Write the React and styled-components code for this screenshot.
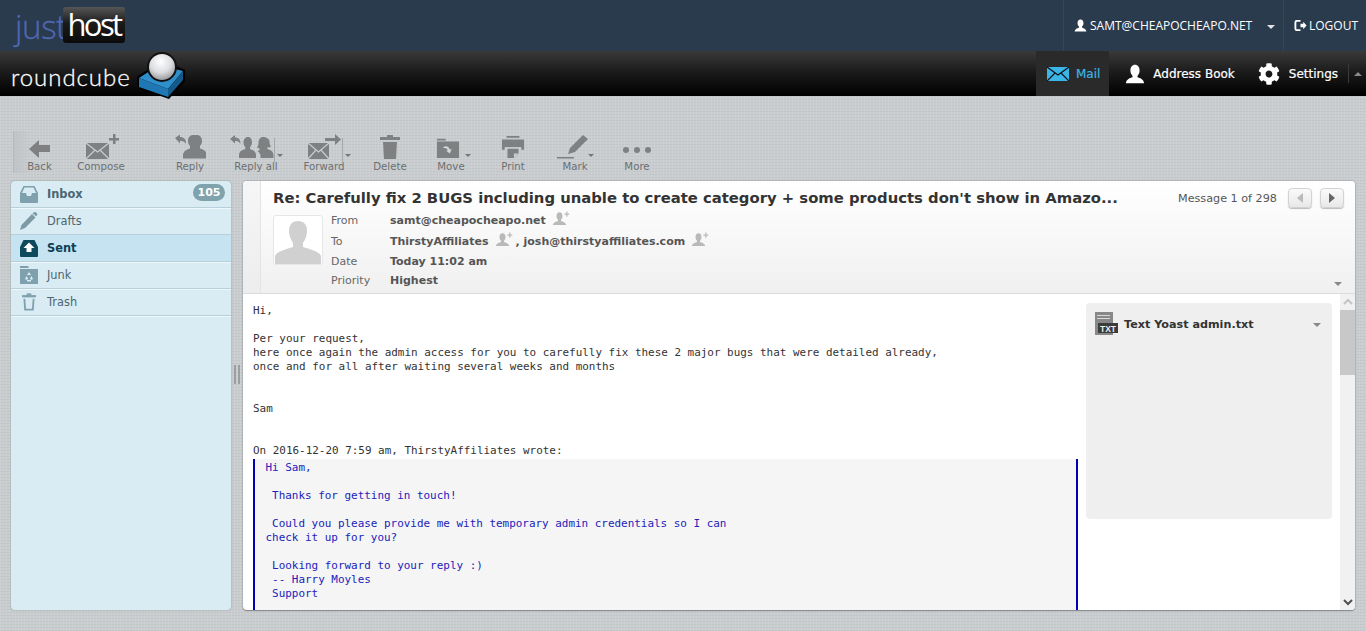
import React from "react";
import styled, { createGlobalStyle } from "styled-components";
import { FaCog } from "react-icons/fa";

const Global = createGlobalStyle`
  html, body { margin: 0; padding: 0; height: 100%; overflow: hidden; }
  body { font-family: "DejaVu Sans", Verdana, sans-serif; }
  *, *::before, *::after { box-sizing: border-box; }
`;

const Page = styled.div`
  width: 1366px; height: 631px; display: flex; flex-direction: column; overflow: hidden;
  background-color: #c9cdcf;
  background-image:
    repeating-linear-gradient(90deg, rgba(255,255,255,.09) 0 1px, transparent 1px 3px),
    repeating-linear-gradient(0deg, rgba(0,0,0,.035) 0 1px, transparent 1px 3px);
`;
const TopBar = styled.header`
  height: 51px; flex: none; background: #2a3b4e; display: flex; justify-content: space-between; align-items: stretch;
`;
const HostLogo = styled.div`
  display: flex; margin: 7px 0 0 15px; height: 36px; align-items: center; font-family: "Open Sans", sans-serif;
`;
const Just = styled.span`
  color: #4f68b4; font-weight: 300; font-size: 33px; letter-spacing: -.4px; width: 48px; margin-top: 3px; -webkit-text-stroke: .3px #4f68b4;
`;
const Host = styled.span`
  width: 62px; height: 36px; line-height: 34px; text-align: center; color: #fff; border-radius: 3px; font-size: 31px; letter-spacing: -2.6px;
  background: linear-gradient(#565656, #1b1b1b 45%, #0b0b0b);
`;
const TopRight = styled.div`display: flex;`;
const TopItem = styled.div`
  display: flex; align-items: center; width: ${p => p.$w}px; padding-left: ${p => p.$pl}px;
  border-left: 1px solid #34465a; color: #fff; font: 12px "Open Sans", sans-serif; gap: ${p => p.$gap || 3}px;
`;
const TopCaret = styled.i`
  width: 0; height: 0; margin-left: 12px; margin-top: 2px; border: 4px solid transparent; border-top-color: #dfe3e7; border-bottom: 0;
`;
const TaskBar = styled.div`
  height: 45px; flex: none; display: flex; justify-content: space-between;
  background: linear-gradient(#3a3a3a, #1c1c1c 45%, #000);
`;
const CubeLogo = styled.div`
  display: flex; margin-left: 11px; position: relative;
`;
const CubeText = styled.span`
  font: 300 24px Lato, sans-serif; letter-spacing: .95px; color: #fff; margin-top: 10px; line-height: 32px; width: 126px; -webkit-text-stroke: .3px #fff;
`;
const Cube = styled.svg`
  width: 48px; height: 46px; margin-top: 2px; overflow: visible; flex: none;
`;
const TaskNav = styled.nav`display: flex; align-items: stretch;`;
const TaskItem = styled.a`
  display: flex; align-items: center; padding: 0 ${p => p.$pr}px 0 ${p => p.$pl}px; gap: ${p => p.$gap}px;
  font-size: 12px; -webkit-text-stroke: .2px currentColor; color: ${p => (p.$active ? "#3bb5e8" : "#fff")};
  background: ${p => (p.$active ? "#2a2a2a" : "transparent")};
`;
const TaskEnd = styled.div`
  width: 18px; margin: 13px 0; border-left: 1px solid #3a3a3a; display: flex; align-items: center; justify-content: center;
  &::after { content: ""; border: 4px solid transparent; border-bottom-color: #888; border-top: 0; }
`;
const Toolbar = styled.div`
  height: 85px; flex: none; display: flex; align-items: flex-end; padding: 0 0 8px 13px;
`;
const ToolBtn = styled.div`
  width: ${p => p.$w}px; margin-left: ${p => p.$ml || 0}px; height: 42px; display: flex; flex-direction: column; align-items: center; justify-content: flex-end;
  color: #6c6f71; font-size: 10.2px; line-height: 12px; position: relative;
  ${p => p.$first && "border-left: 1px solid #b4b8ba; background: linear-gradient(90deg, #c0c4c6, transparent 35%);"}
  svg { display: block; margin-bottom: 1px; }
`;
const Drop = styled.i`
  position: absolute; right: ${p => p.$r}px; top: 23px; width: 0; height: 0; border: 3.5px solid transparent; border-top-color: #777; border-bottom: 0;
  ${p => p.$sep && `&::before { content: ""; position: absolute; left: -6px; top: -19px; height: 24px; width: 1px; background: #a4a8aa; }`}
`;
const Main = styled.div`
  flex: 1; display: flex; padding: 0 11px 21px 11px; min-height: 0;
`;
const Sidebar = styled.aside`
  width: 220px; background: #d9ecf4; border-radius: 4px; overflow: hidden; box-shadow: 0 0 2px #8f9496;
`;
const Folder = styled.div`
  height: 27px; display: flex; align-items: center; padding-left: 8px; gap: 8px; font-size: 11.4px; position: relative;
  color: ${p => (p.$sel ? "#0e3f52" : "#4d6670")}; font-weight: ${p => (p.$bold ? 700 : 400)};
  background: ${p => (p.$sel ? "#c5e3f0" : "transparent")};
  border-bottom: 1px solid #b9d0d8; box-shadow: 0 1px 0 #eef7fb;
  svg { width: 20px; height: 20px; flex: none; }
`;
const Badge = styled.span`
  position: absolute; right: 6px; top: 3px; height: 17px; width: 32px; border-radius: 9px; background: #7fa2ad; color: #fff; font-weight: 700; text-align: center; line-height: 17px; font-size: 11px;
`;
const Split = styled.div`
  width: 12px; display: flex; align-items: center; justify-content: center; padding-bottom: 42px;
  &::after { content: ""; width: 6px; height: 19px; border-left: 2px solid #9a9fa2; border-right: 2px solid #9a9fa2; }
`;
const Panel = styled.section`
  flex: 1; min-width: 0; background: #fff; border-radius: 4px; overflow: hidden; display: flex; flex-direction: column; box-shadow: 0 0 2px #85898b, 0 1px 1px #85898b;
`;
const MsgHead = styled.div`
  height: 113px; flex: none; display: flex; border-bottom: 1px solid #dcdcdc; background: linear-gradient(#fff, #f0f0f0);
`;
const Strip = styled.div`
  width: 18px; background: linear-gradient(#f6f6f6, #ededed); border-right: 1px solid #e4e4e4;
`;
const HeadBody = styled.div`flex: 1; min-width: 0; padding: 7px 10px 0 12px; position: relative;`;
const SubjectRow = styled.div`display: flex; align-items: center; height: 20px;`;
const Subject = styled.h1`
  width: 847px; flex: none; margin: -2px 0 0; font-size: 14.82px; font-weight: 700; color: #333; white-space: nowrap; overflow: hidden;
`;
const Counter = styled.span`
  margin: 1px 0 0 58px; font-size: 11.2px; color: #555; white-space: nowrap;
`;
const PageBtn = styled.span`
  width: 24px; height: 20px; margin-left: ${p => p.$ml}px; flex: none; border: 1px solid #d2d2d2; border-radius: 4px; background: linear-gradient(#fafafa, #e8e8e8); box-shadow: 0 1px 1px #bbb;
  display: flex; align-items: center; justify-content: center;
`;
const Tri = styled.i`
  width: 0; height: 0; border: 5px solid transparent;
  ${p => (p.$dir === "l" ? `border-right: 6px solid ${p.$c}; border-left: 0;` : `border-left: 6px solid ${p.$c}; border-right: 0;`)}
`;
const HeadInfo = styled.div`display: flex; margin-top: 7px;`;
const Avatar = styled.div`
  width: 50px; height: 50px; background: #fff; border: 1px solid #e6e6e6; border-radius: 3px; overflow: hidden; flex: none;
  svg { display: block; }
`;
const Grid = styled.div`
  margin-left: 8px; display: grid; grid-template-columns: 59px 1fr; grid-template-rows: 23px 20px 19px 19px; align-items: center; font-size: 11px; line-height: 14px; margin-top: -6px;
`;
const Lab = styled.span`color: #666;`;
const Val = styled.span`
  color: #555; font-weight: 700; display: flex; align-items: center; white-space: pre;
  svg { margin: -4px 3px 0 6px; }
`;
const HeadCaret = styled.i`
  position: absolute; right: 13px; bottom: 7px; border: 4px solid transparent; border-top-color: #888; border-bottom: 0;
`;
const MsgBody = styled.div`flex: 1; min-height: 0; display: flex;`;
const MsgCol = styled.div`
  width: 843px; flex: none; padding: 10px 8px 0 10px; overflow: hidden;
`;
const Mono = styled.pre`
  margin: 0; font: 10.94px/14px "DejaVu Sans Mono", monospace; color: #333; white-space: pre;
`;
const Quote = styled.blockquote`
  margin: 1px 0 0; padding: 2px 0 0 10.5px; background: #f5f5f5; border-left: 2px solid #0000b4; border-right: 2px solid #0000b4; height: 160px;
`;
const QuoteText = styled(Mono)`color: #2222bb;`;
const Attach = styled.div`
  width: 246px; height: 216px; margin: 9px 8px 0 0; flex: none; background: #efefef; border-radius: 4px; padding: 9px 9px 0 9px; display: flex; align-items: flex-start; gap: 6px; font-size: 11.2px; font-weight: 700; color: #333;
`;
const AttachName = styled.span`flex: 1; margin-top: 6px;`;
const AttachCaret = styled.i`
  margin-top: 11px; margin-right: 2px; border: 4px solid transparent; border-top-color: #888; border-bottom: 0;
`;
const Scroll = styled.div`
  width: 15px; flex: none; margin-left: auto; background: #f1f1f1; display: flex; flex-direction: column; align-items: center;
`;
const Thumb = styled.div`width: 15px; height: 65px; background: #c8c8c8;`;
const ScrollSp = styled.div`flex: 1;`;
const Chevron = styled.svg`display: block; margin: 3px 0;`;

const G = "#7e8082";
const Bust = ({ s = 24, c = G, plus }) => (
  <svg width={s} height={s} viewBox="0 0 24 24" fill={c}>
    <path d="M10 3c-2.6 0-4 2-4 5 0 2.2.8 4 2 5v1.6c-2.5 1-6 1.7-7 5.4h18c-1-3.7-4.500-4.400-7-5.400V13c1.200-1 2-2.800 2-5 0-3-1.400-5-4-5z" />
    {plus && <path d="M19 2h1.600v2.600H23v1.600h-2.400V9H19V6.200h-2.500V4.600H19z" />}
  </svg>
);
const Back = () => (
  <svg width="22" height="24" viewBox="0 0 22 24" fill={G}><path d="M10 4v5h11v7H10v6L0 13z" /></svg>
);
const Env = ({ w = 36, c = G }) => (
  <svg width={w} height="26" viewBox="0 0 36 26" fill="none">
    <path d="M3 9h23v16H3z" fill={c} />
    <path d="M3 9l11.500 9L26 9M3 25l9-9M26 25l-9-9" stroke="#c9cdcf" strokeWidth="1.200" />
    <path d="M30 0h2.500v4H36v2.500h-3.500V10H30V6.500h-4V4h4z" fill={c} />
  </svg>
);
const Fwd = () => (
  <svg width="36" height="26" viewBox="0 0 36 26" fill="none">
    <path d="M2 9h21v16H2z" fill={G} />
    <path d="M2 9l10.500 9L23 9M2 25l8-9M23 25l-8-9" stroke="#c9cdcf" strokeWidth="1.200" />
    <path d="M19 4h10V0l6 5.500L29 11V7H19z" fill={G} />
  </svg>
);
const Reply = () => (
  <svg width="32" height="26" viewBox="0 0 32 26" fill={G}>
    <path d="M19 1c-3 0-5 2.500-5 6 0 2 .7 3.800 2 5v2.500c-3 1-6 2-7 6v4h24v-4c-1-4-4-5-7-6V12c1.300-1.200 2-3 2-5 0-3.500-2-6-5-6z" />
    <path d="M1 4l5-3.500V3c4 0 6 2 6 7-1.500-2.500-3-3.200-6-3.200V9.500z" />
  </svg>
);
const ReplyAll = () => (
  <svg width="44" height="26" viewBox="0 0 44 26" fill={G} style={{ marginRight: 8 }}>
    <path d="M18 3c-3 0-4.500 2.500-4.500 5.500 0 2 .7 3.500 1.800 4.500v2c-3 1-6 2-6.300 6v3H26v-3c-.3-4-3-5-6-6v-2c1-1 2-2.500 2-4.500C22 5.500 21 3 18 3z" />
    <path d="M33 3c-3 0-4.500 2.500-4.500 5.500 0 2-.5 4-1.500 5l2.500 1v1.500c-1 .5-1.500 1-1.800 1.500 1.800 1 2.800 2.500 2.800 4.500v2h13v-3c-.3-4-3-5-6-6v-2c2 .5 3 0 3.500-.5-1-1-1.500-3-1.500-5C39.500 5 36 3 33 3z" />
    <path d="M0 5l5-4v2.500c3.500 0 5.500 2 5.500 6.500C9 7.500 7.500 7 5 7v2.500z" />
  </svg>
);
const Trash = ({ w = 24, c = G, open }) => (
  <svg width={w} height="26" viewBox="0 0 24 26" fill={open ? "none" : c}>
    {open ? (
      <g stroke={c} strokeWidth="2.400"><path d="M6 9l1 14h10l1-14" /><path d="M3 5.500h18" strokeWidth="3" /><path d="M9 3h6" /></g>
    ) : (
      <g><path d="M9 1h6v2h7v3H2V3h7z" /><path d="M5 8h14l-1 17H6z" /></g>
    )}
  </svg>
);
const Move = () => (
  <svg width="24" height="26" viewBox="0 0 26 26" style={{ marginRight: 6 }}>
    <path d="M1 4h9l1 2H1zM1 7h24v18H1z" fill={G} />
    <path d="M7 14c3-3 7-2 8 2l2-1-2 5-4-3 2-.5c-1-2-3-3-6-2.500z" fill="#d6d9da" />
  </svg>
);
const Print = () => (
  <svg width="24" height="26" viewBox="0 0 26 26" fill={G}>
    <path d="M6 1h14v2H6zM1 5h24v11h-3v-3H4v3H1z" />
    <path d="M7 15h12v5l-5 5H7z" />
    <path d="M14 25v-5h5z" fill="#c9cdcf" />
  </svg>
);
const Mark = () => (
  <svg width="34" height="26" viewBox="0 0 34 26" fill={G} style={{ marginRight: 4 }}>
    <path d="M12 20l2-6L27 1l5 4L19 18z" />
    <path d="M1 23h17v1.500H1z" />
  </svg>
);
const More = () => (
  <svg width="30" height="12" viewBox="0 0 30 12" fill={G} style={{ marginBottom: 5 }}>
    <circle cx="4" cy="6" r="3" /><circle cx="15" cy="6" r="3" /><circle cx="26" cy="6" r="3" />
  </svg>
);
const Tray = ({ c, arrow }) => (
  <svg viewBox="0 0 20 20">
    <path d="M4.500 2h11L19 9v9a1 1 0 0 1-1 1H2a1 1 0 0 1-1-1V9z" fill={c} />
    <path d="M5.500 3.500h9L17 9h-4l-1 3H8L7 9H3z" fill={arrow ? c : "#d9ecf4"} />
    {arrow && <path d="M10 4.500L15.500 10H12.500v4h-5v-4H4.500z" fill="#fff" />}
  </svg>
);
const Pencil = () => (
  <svg viewBox="0 0 20 20" fill="#7d9aa5">
    <path d="M1 19l1.500-5L13 3l3.500 3.500L6 17zM14.500 1.500c1-1 2-.7 3 .3s1 2 .5 2.500l-1 1-3.500-3z" />
  </svg>
);
const Junk = () => (
  <svg viewBox="0 0 20 20">
    <path d="M1 1h8l1 2H1zM1 4h18v15H1z" fill="#7fa1ad" />
    <path d="M10 7l2 3H8zM6 14l1.500-3 1.500 2.500-1 1.500zM14 14l-1.500-3-1.500 2.500 1 1.500zM8 15h4v1.500H8z" fill="#d9ecf4" />
  </svg>
);
const TxtIcon = () => (
  <svg width="23" height="23" viewBox="0 0 23 23">
    <path d="M0 0h18v23H0z" fill="#888" />
    <path d="M2 3h13v1H2zM2 6h13v1H2z" fill="#d8d8d8" />
    <path d="M3 11h20v10H3z" fill="#3b3b3b" />
    <text x="13" y="19.500" fill="#eee" fontSize="8.500" fontWeight="700" textAnchor="middle" fontFamily="Liberation Sans">TXT</text>
  </svg>
);
const MiniAdd = () => <Bust s={18} c="#b9b9b9" plus />;

const tools = [
  { l: "Back", w: 52, first: true, i: <Back /> },
  { l: "Compose", w: 72, i: <Env /> },
  { l: "Reply", w: 50, ml: 28, i: <Reply /> },
  { l: "Reply all", w: 72, ml: 5, i: <ReplyAll />, d: 9, sep: true },
  { l: "Forward", w: 64, i: <Fwd />, d: 5, sep: true },
  { l: "Delete", w: 68, i: <Trash /> },
  { l: "Move", w: 54, i: <Move />, d: 7 },
  { l: "Print", w: 70, i: <Print /> },
  { l: "Mark", w: 54, i: <Mark />, d: 8 },
  { l: "More", w: 70, i: <More /> },
];

export default function App() {
  return (
    <Page>
      <Global />
      <TopBar>
        <HostLogo><Just>just</Just><Host>host</Host></HostLogo>
        <TopRight>
          <TopItem $w={220} $pl={10}>
            <svg width="13" height="13" viewBox="0 0 24 24" fill="#fff"><path d="M12 1C8.500 1 6.500 4 6.500 8c0 2.500 1 4.500 2.500 6v2c-3 1-7 2-8 7h22c-1-5-5-6-8-7v-2c1.500-1.500 2.500-3.500 2.500-6 0-4-2-7-5.500-7z" /></svg>
            SAMT@CHEAPOCHEAPO.NET<TopCaret />
          </TopItem>
          <TopItem $w={83} $pl={10} $gap={2}>
            <svg width="13" height="13" viewBox="0 0 14 14" fill="none" stroke="#fff" strokeWidth="2"><path d="M7 2H3a1.500 1.500 0 0 0-1.500 1.500v7A1.500 1.500 0 0 0 3 12h4" /><path d="M7 5h3V3l3.500 4-3.500 4V9H7z" fill="#fff" strokeWidth="0" /></svg>
            LOGOUT
          </TopItem>
        </TopRight>
      </TopBar>
      <TaskBar>
        <CubeLogo>
          <CubeText>roundcube</CubeText>
          <Cube viewBox="0 0 48 46">
            <defs>
              <radialGradient id="dome" cx=".45" cy=".3" r=".75">
                <stop offset="0" stopColor="#ffffff" />
                <stop offset=".55" stopColor="#dcdde0" />
                <stop offset="1" stopColor="#8f9196" />
              </radialGradient>
            </defs>
            <path d="M0 24L20 10h12l16 7v11L32 46 1 35z" fill="#000" />
            <path d="M2 25L22 12l24 6-15 18z" fill="#2f8fcb" />
            <path d="M2 25l29 11v8L2 34z" fill="#1f78b4" />
            <path d="M31 36l15-18v9L31 44z" fill="#145a8a" />
            <circle cx="25" cy="14" r="15" fill="#111" />
            <circle cx="25" cy="14" r="13" fill="url(#dome)" />
          </Cube>
        </CubeLogo>
        <TaskNav>
          <TaskItem $active $pl={11} $pr={9} $gap={7}>
            <svg width="22" height="16" viewBox="0 0 22 16" fill="none" stroke="#3bb5e8"><path d="M0 1h22v14H0z" fill="#3bb5e8" strokeWidth="0" /><path d="M0 1l11 8 11-8M0 15l8-8M22 15l-8-8" stroke="#111" strokeWidth="1.200" /></svg>
            Mail
          </TaskItem>
          <TaskItem $pl={16} $pr={12} $gap={8}>
            <svg width="20" height="20" viewBox="0 0 24 24" fill="#fff"><path d="M12 1C8.500 1 6.500 4 6.500 8c0 2.500 1 4.500 2.500 6v2c-3 1-7 2-8 7h22c-1-5-5-6-8-7v-2c1.500-1.500 2.500-3.500 2.500-6 0-4-2-7-5.500-7z" /></svg>
            Address Book
          </TaskItem>
          <TaskItem $pl={11} $pr={10} $gap={9}>
            <FaCog size={22} color="#fff" />
            Settings
          </TaskItem>
          <TaskEnd />
        </TaskNav>
      </TaskBar>
      <Toolbar>
        {tools.map(t => (
          <ToolBtn key={t.l} $w={t.w} $ml={t.ml} $first={t.first}>
            {t.i}
            {t.d != null && <Drop $r={t.d} $sep={t.sep} />}
            {t.l}
          </ToolBtn>
        ))}
      </Toolbar>
      <Main>
        <Sidebar>
          <Folder $bold><Tray c="#7fa1ad" />Inbox<Badge>105</Badge></Folder>
          <Folder><Pencil />Drafts</Folder>
          <Folder $bold $sel><Tray c="#0e4a5e" arrow />Sent</Folder>
          <Folder><Junk />Junk</Folder>
          <Folder><Trash w={20} c="#7fa1ad" open />Trash</Folder>
        </Sidebar>
        <Split />
        <Panel>
          <MsgHead>
            <Strip />
            <HeadBody>
              <SubjectRow>
                <Subject>Re: Carefully fix 2 BUGS including unable to create category + some products don't show in Amazo...</Subject>
                <Counter>Message 1 of 298</Counter>
                <PageBtn $ml={11}><Tri $dir="l" $c="#bbb" /></PageBtn>
                <PageBtn $ml={8}><Tri $c="#666" /></PageBtn>
              </SubjectRow>
              <HeadInfo>
                <Avatar>
                  <svg width="48" height="48" viewBox="0 0 48 48" fill="#d0d0d0"><path d="M24 5c-6 0-9 4-9 10 0 5 2 9 4 12v4c-6 2-16 4-18 9v8h46v-8c-2-5-12-7-18-9v-4c2-3 4-7 4-12 0-6-3-10-9-10z" /></svg>
                </Avatar>
                <Grid>
                  <Lab>From</Lab><Val>samt@cheapocheapo.net<MiniAdd /></Val>
                  <Lab>To</Lab><Val>ThirstyAffiliates<MiniAdd />, josh@thirstyaffiliates.com<MiniAdd /></Val>
                  <Lab>Date</Lab><Val>Today 11:02 am</Val>
                  <Lab>Priority</Lab><Val>Highest</Val>
                </Grid>
              </HeadInfo>
              <HeadCaret />
            </HeadBody>
          </MsgHead>
          <MsgBody>
            <MsgCol>
              <Mono>{`Hi,

Per your request,
here once again the admin access for you to carefully fix these 2 major bugs that were detailed already,
once and for all after waiting several weeks and months


Sam


On 2016-12-20 7:59 am, ThirstyAffiliates wrote:`}</Mono>
              <Quote>
                <QuoteText>{`Hi Sam,

 Thanks for getting in touch!

 Could you please provide me with temporary admin credentials so I can
check it up for you?

 Looking forward to your reply :)
 -- Harry Moyles
 Support`}</QuoteText>
              </Quote>
            </MsgCol>
            <Attach>
              <TxtIcon />
              <AttachName>Text Yoast admin.txt</AttachName>
              <AttachCaret />
            </Attach>
            <Scroll>
              <Chevron width="10" height="10" viewBox="0 0 10 10" fill="none" stroke="#c4c4c4" strokeWidth="2"><path d="M1 7l4-4 4 4" /></Chevron>
              <Thumb />
              <ScrollSp />
              <Chevron width="10" height="10" viewBox="0 0 10 10" fill="none" stroke="#505050" strokeWidth="2"><path d="M1 3l4 4 4-4" /></Chevron>
            </Scroll>
          </MsgBody>
        </Panel>
      </Main>
    </Page>
  );
}
